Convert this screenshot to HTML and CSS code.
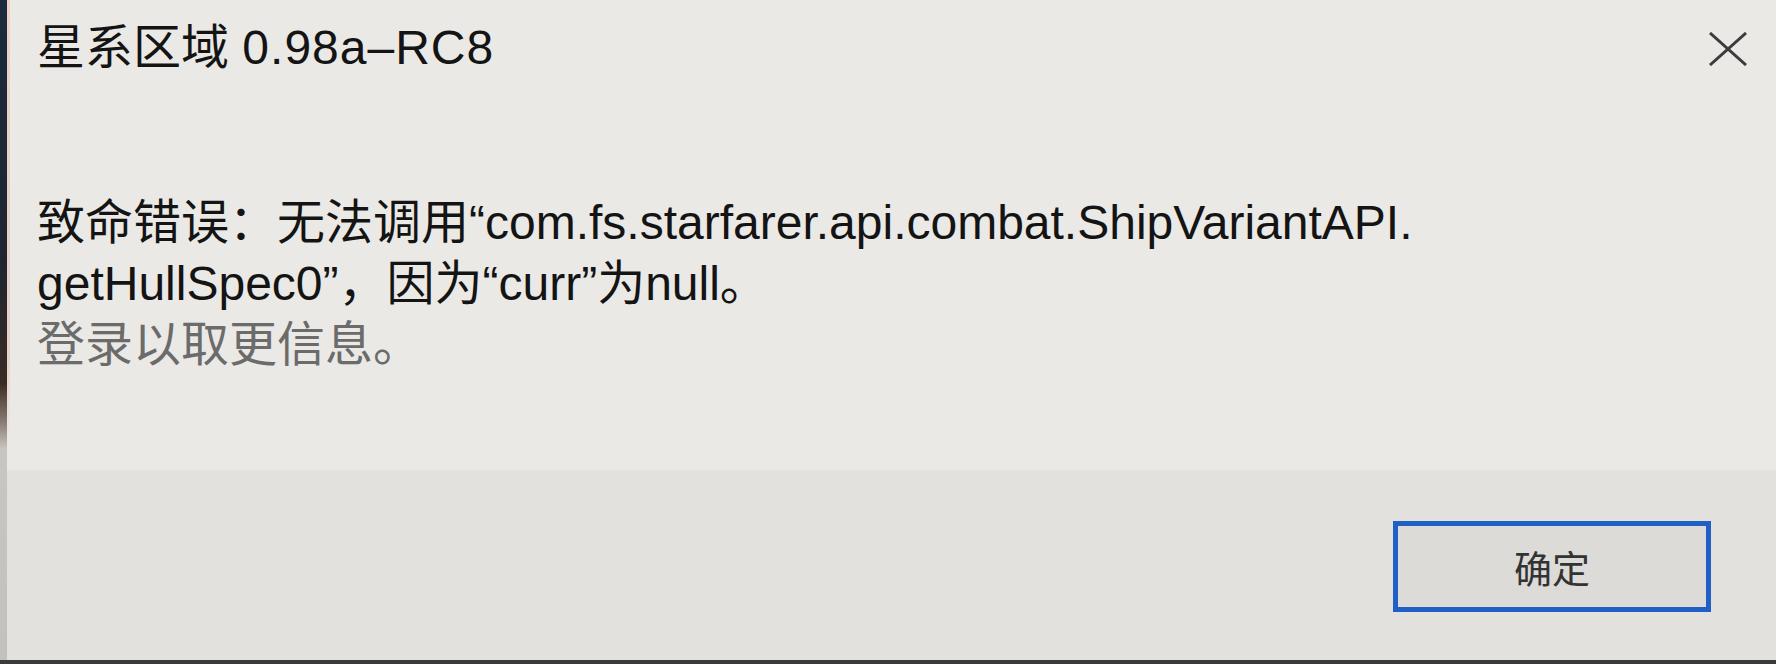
FILE: index.html
```html
<!DOCTYPE html>
<html lang="zh-CN">
<head>
  <meta charset="UTF-8">
  <title>星系区域 0.98a-RC8</title>
  <link rel="stylesheet" href="styles.css">
</head>
<body>
  <div class="fenetre">
    <div class="titre">
      <h1>星系区域 <span class="version">0.98a–RC8</span></h1>
      <svg class="fermer" width="38" height="34" viewBox="0 0 38 34">
        <path d="M1 1 L37 33 M37 1 L1 33" stroke="#3c3c3c" stroke-width="3" fill="none"/>
      </svg>
    </div>

    <div class="message">
      <p>致命错误：无法调用“com.fs.starfarer.api.combat.ShipVariantAPI.</p>
      <p>getHullSpec0”，因为“curr”为null。</p>
      <p class="info">登录以取更信息。</p>
    </div>

    <div class="pied">
      <button class="bouton">确定</button>
    </div>
  </div>
</body>
</html>
```

FILE: styles.css
```css
body {
  margin: 0;
  background: #e8e7e3;
  font-family: "Liberation Sans", "Noto Sans CJK SC", sans-serif;
  color: #141414;
}

.fenetre {
  height: 664px;
  display: flex;
  flex-direction: column;
  box-sizing: border-box;
  padding-left: 7px;
  border-bottom: 4px solid #3a3a3a;
  background: #eae9e5;
  position: relative;
}

/* bord sombre de la photo, à gauche */
.fenetre::before {
  content: "";
  position: absolute;
  left: 0;
  top: 0;
  bottom: 0;
  width: 7px;
  background: linear-gradient(#1b2a3d, #1e2530 40%, #3a2a24 58%, #8a7c74 64%, #c8c6c2 68%, #c3c1bd);
}

/* liseré clair juste après */
.fenetre::after {
  content: "";
  position: absolute;
  left: 7px;
  top: 0;
  width: 3px;
  height: 440px;
  background: linear-gradient(#ecd2c6, #e6d0c8 80%, rgba(234, 233, 229, 0));
}

.titre {
  display: flex;
  justify-content: space-between;
  align-items: flex-start;
  padding: 18px 29px 0 30px;
}

h1 {
  margin: 0;
  font-size: 48px;
  line-height: 60px;
  font-weight: normal;
}

.version {
  letter-spacing: 1px;
}

.fermer {
  margin-top: 14px;
}

.message {
  margin-top: 114px;
  padding-left: 30px;
  font-size: 48px;
  line-height: 61px;
}

.message p {
  margin: 0;
  white-space: nowrap;
}

.info {
  color: #6b6b6b;
}

.pied {
  flex: 1;
  margin-top: 95px;
  background: #e2e1de;
  display: flex;
  justify-content: flex-end;
  align-items: flex-start;
  padding: 51px 65px 0 0;
}

.bouton {
  width: 318px;
  height: 91px;
  box-sizing: border-box;
  border: 5px solid #1f5fc6;
  background: #dcdbd8;
  color: #333;
  font-family: "Noto Sans CJK SC", sans-serif;
  font-size: 38px;
  padding: 0;
}
```
